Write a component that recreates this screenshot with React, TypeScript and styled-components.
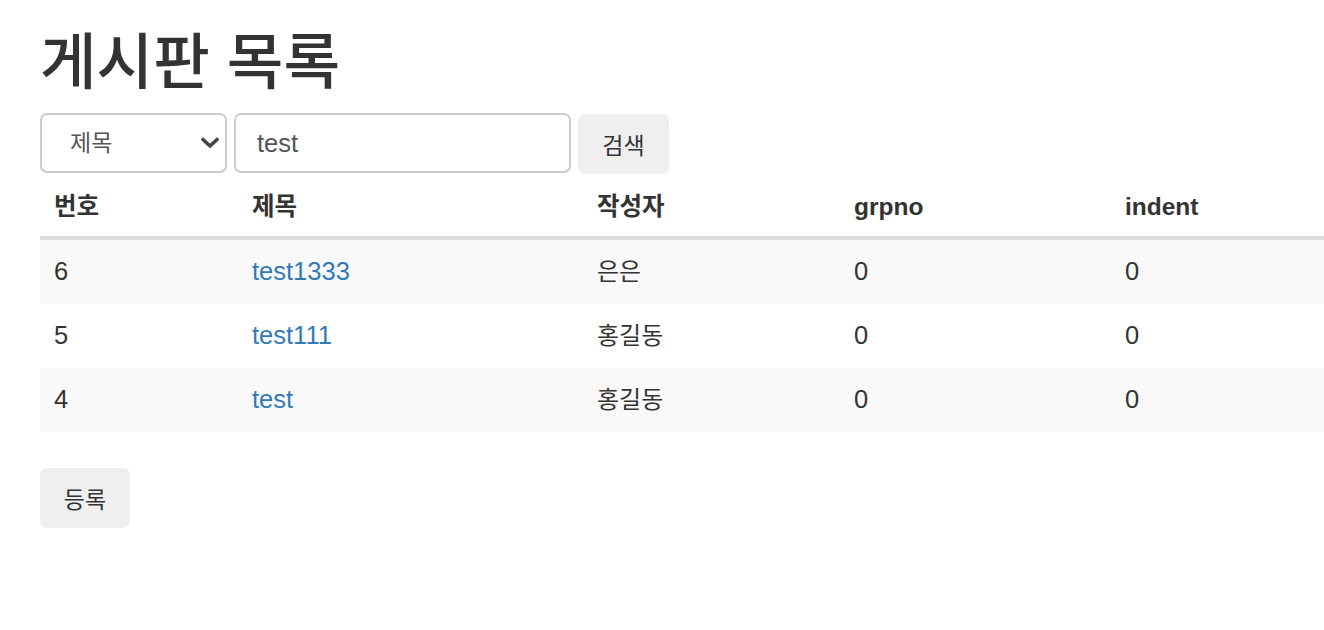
import React from "react";
import styled, { createGlobalStyle } from "styled-components";

const Global = createGlobalStyle`
  html, body { margin: 0; padding: 0; background: #fff; overflow: hidden; }
  body {
    font-family: "Liberation Sans", "Noto Sans CJK KR", sans-serif;
    font-size: 24.5px;
    color: #333;
  }
  * { box-sizing: border-box; }
`;

const Page = styled.div`
  padding: 0 0 0 40px;
`;

const Title = styled.h1`
  margin: 28px 0 16px;
  font-family: "Liberation Sans", "Noto Sans CJK KR", sans-serif;
  font-size: 61.5px;
  line-height: 69px;
  font-weight: 500;
  color: #333;
`;

const SearchForm = styled.form`
  display: flex;
  align-items: flex-start;
  gap: 7px;
  height: 60px;
`;

const SelectWrap = styled.div`
  position: relative;
  width: 187px;
  height: 60px;
`;

const Select = styled.select`
  appearance: none;
  width: 100%;
  height: 100%;
  padding: 0 0 0 28px;
  border: 2px solid #ccc;
  border-radius: 7px;
  background: #fff;
  font-family: inherit;
  font-size: 23px;
  color: #555;
  outline: none;
`;

const Chevron = styled.svg`
  position: absolute;
  right: 8px;
  top: 24px;
  width: 18px;
  height: 12px;
  pointer-events: none;
`;

const Input = styled.input`
  width: 337px;
  height: 60px;
  padding: 0 21px;
  border: 2px solid #ccc;
  border-radius: 7px;
  font-family: inherit;
  font-size: 25.5px;
  color: #555;
  outline: none;
`;

const Button = styled.button<{ $w: number }>`
  width: ${(p) => p.$w}px;
  height: 60px;
  margin-top: 1px;
  border: none;
  border-radius: 7px;
  background: #efefef;
  font-family: inherit;
  font-size: 23px;
  color: #333;
  padding: 0;
`;

const Table = styled.table`
  width: 100%;
  border-collapse: collapse;
  table-layout: fixed;
`;

const Th = styled.th`
  text-align: left;
  font-weight: bold;
  padding: 16px 14px 12px;
  line-height: 35px;
  border-bottom: 4px solid #ddd;
  font-size: 24.5px;
`;

const Tr = styled.tr<{ $striped: boolean }>`
  background: ${(p) => (p.$striped ? "#f9f9f9" : "#fff")};
  & + & td { border-top: 2px solid #ddd; }
`;

const Td = styled.td<{ $ko?: boolean }>`
  padding: 14px 14px 15px;
  line-height: 35px;
  font-size: ${(p) => (p.$ko ? "24px" : "25.5px")};
`;

const Link = styled.a`
  color: #337ab7;
  text-decoration: none;
`;

const Footer = styled.div`
  margin-top: 35px;
`;

const rows = [
  { no: 6, title: "test1333", writer: "은은", grpno: 0, indent: 0 },
  { no: 5, title: "test111", writer: "홍길동", grpno: 0, indent: 0 },
  { no: 4, title: "test", writer: "홍길동", grpno: 0, indent: 0 },
];

export default function App() {
  return (
    <Page>
      <Global />
      <Title>게시판 목록</Title>
      <SearchForm onSubmit={(e) => e.preventDefault()}>
        <SelectWrap>
          <Select defaultValue="title">
            <option value="title">제목</option>
            <option value="writer">작성자</option>
          </Select>
          <Chevron viewBox="0 0 18 12">
            <path d="M2 2.5 L9 9 L16 2.5" fill="none" stroke="#444" strokeWidth="3.6" strokeLinecap="round" strokeLinejoin="round" />
          </Chevron>
        </SelectWrap>
        <Input defaultValue="test" />
        <Button $w={91} type="submit">검색</Button>
      </SearchForm>
      <Table>
        <colgroup>
          <col style={{ width: 198 }} />
          <col style={{ width: 345 }} />
          <col style={{ width: 257 }} />
          <col style={{ width: 271 }} />
          <col />
        </colgroup>
        <thead>
          <tr>
            <Th>번호</Th>
            <Th>제목</Th>
            <Th>작성자</Th>
            <Th>grpno</Th>
            <Th>indent</Th>
          </tr>
        </thead>
        <tbody>
          {rows.map((r, i) => (
            <Tr key={r.no} $striped={i % 2 === 0}>
              <Td>{r.no}</Td>
              <Td><Link href="#">{r.title}</Link></Td>
              <Td $ko>{r.writer}</Td>
              <Td>{r.grpno}</Td>
              <Td>{r.indent}</Td>
            </Tr>
          ))}
        </tbody>
      </Table>
      <Footer>
        <Button $w={90} type="button">등록</Button>
      </Footer>
    </Page>
  );
}
